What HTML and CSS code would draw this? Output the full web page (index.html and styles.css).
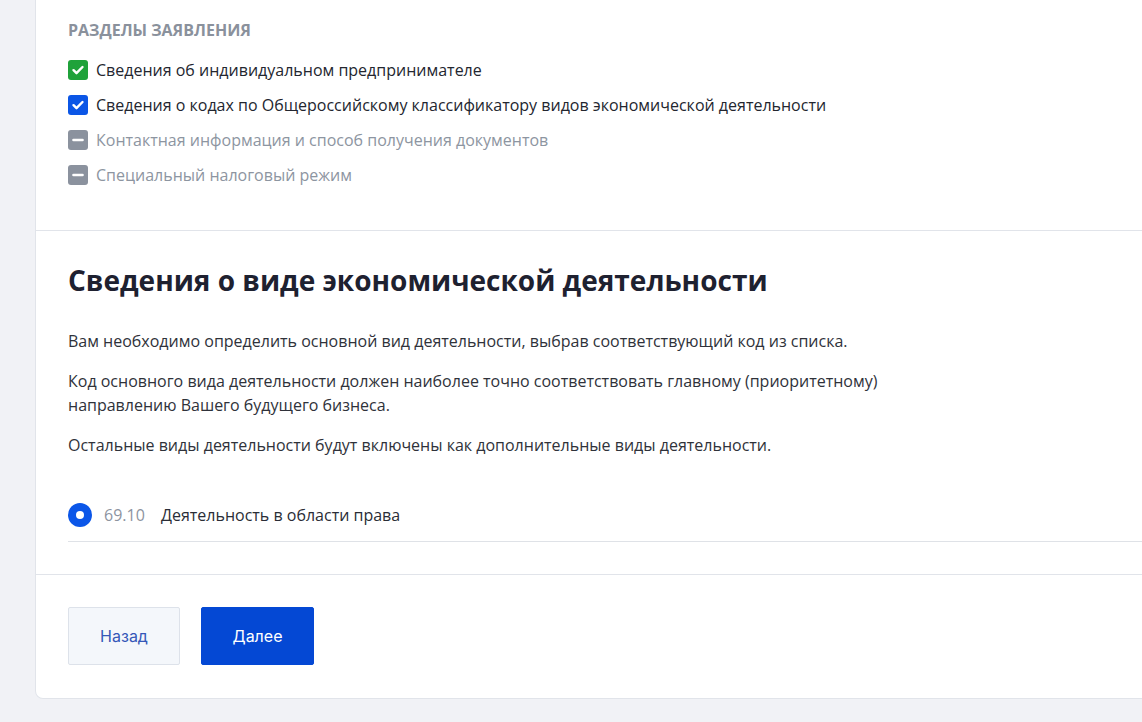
FILE: index.html
```html
<!DOCTYPE html>
<html lang="ru">
<head>
<meta charset="utf-8">
<title>Сведения о виде экономической деятельности</title>
<link rel="stylesheet" href="styles.css">
</head>
<body>
<main class="card">
  <section class="section sections-list">
    <h3 class="caption">РАЗДЕЛЫ ЗАЯВЛЕНИЯ</h3>
    <ul class="steps">
      <li class="step">
        <span class="box box-green">
          <svg viewBox="0 0 20 20" width="20" height="20"><path d="M5.5 10.2l3 3 6-6.2" fill="none" stroke="#fff" stroke-width="2.4" stroke-linecap="round" stroke-linejoin="round"/></svg>
        </span>
        <span class="step-label">Сведения об индивидуальном предпринимателе</span>
      </li>
      <li class="step">
        <span class="box box-blue">
          <svg viewBox="0 0 20 20" width="20" height="20"><path d="M5.5 10.2l3 3 6-6.2" fill="none" stroke="#fff" stroke-width="2.4" stroke-linecap="round" stroke-linejoin="round"/></svg>
        </span>
        <span class="step-label">Сведения о кодах по Общероссийскому классификатору видов экономической деятельности</span>
      </li>
      <li class="step step-off">
        <span class="box box-gray">
          <svg viewBox="0 0 20 20" width="20" height="20"><path d="M5.5 10h9" fill="none" stroke="#fff" stroke-width="2.6" stroke-linecap="round"/></svg>
        </span>
        <span class="step-label">Контактная информация и способ получения документов</span>
      </li>
      <li class="step step-off">
        <span class="box box-gray">
          <svg viewBox="0 0 20 20" width="20" height="20"><path d="M5.5 10h9" fill="none" stroke="#fff" stroke-width="2.6" stroke-linecap="round"/></svg>
        </span>
        <span class="step-label">Специальный налоговый режим</span>
      </li>
    </ul>
  </section>

  <section class="section activity">
    <h1 class="title">Сведения о виде экономической деятельности</h1>
    <p class="text">Вам необходимо определить основной вид деятельности, выбрав соответствующий код из списка.</p>
    <p class="text">Код основного вида деятельности должен наиболее точно соответствовать главному (приоритетному) направлению Вашего будущего бизнеса.</p>
    <p class="text">Остальные виды деятельности будут включены как дополнительные виды деятельности.</p>
    <div class="option">
      <span class="radio"></span>
      <span class="code">69.10</span>
      <span class="option-label">Деятельность в области права</span>
    </div>
  </section>

  <section class="section actions">
    <button class="btn btn-secondary">Назад</button>
    <button class="btn btn-primary">Далее</button>
  </section>
</main>
</body>
</html>
```

FILE: styles.css
```css
html, body {
  margin: 0;
  padding: 0;
}

body {
  background: #f1f2f6;
  font-family: "Open Sans", "Noto Sans", sans-serif;
  color: #2a2d36;
  overflow: hidden;
  width: 1142px;
  height: 722px;
}

.card {
  margin-left: 35px;
  margin-right: -30px;
  background: #fff;
  border: 1px solid #e1e4ea;
  border-top: none;
  border-radius: 0 0 8px 8px;
}

.section {
  border-bottom: 1px solid #e1e4ea;
}

.section:last-child {
  border-bottom: none;
}

.sections-list {
  padding: 20px 0 45px 32px;
}

.caption {
  margin: 0;
  font-size: 16px;
  line-height: 20px;
  font-weight: 700;
  color: #8a919c;
}

.steps {
  list-style: none;
  margin: 20px 0 0;
  padding: 0;
  display: flex;
  flex-direction: column;
  gap: 15px;
}

.step {
  display: flex;
  align-items: center;
  gap: 8px;
  height: 20px;
  font-size: 16px;
  color: #23262f;
}

.step-off {
  color: #8d95a1;
}

.box {
  width: 20px;
  height: 20px;
  border-radius: 3px;
  display: flex;
  flex-shrink: 0;
}

.box-green { background: #1fa23a; }
.box-blue { background: #0b56e6; }
.box-gray { background: #8b929e; }

.activity {
  padding: 31px 0 32px 32px;
}

.title {
  margin: 0 0 31px;
  font-size: 28px;
  line-height: 36px;
  font-weight: 700;
  color: #1e2130;
}

.text {
  margin: 0 0 16px;
  max-width: 860px;
  font-size: 16px;
  line-height: 24px;
  color: #2f323a;
}

.option {
  margin-top: 34px;
  display: flex;
  align-items: center;
  padding: 12px 0 14px;
  border-bottom: 1px solid #dfe2e7;
  font-size: 16px;
}

.radio {
  width: 24px;
  height: 24px;
  border-radius: 50%;
  background: #0b56e8;
  display: flex;
  align-items: center;
  justify-content: center;
  margin-right: 12px;
}

.radio::after {
  content: "";
  width: 8px;
  height: 8px;
  border-radius: 50%;
  background: #fff;
}

.code {
  color: #8d949f;
  width: 57px;
}

.option-label {
  color: #2a2d36;
}

.actions {
  padding: 32px 0 33px 32px;
  display: flex;
  gap: 21px;
}

.btn {
  height: 58px;
  border-radius: 2px;
  font-family: "Inter", "Roboto", sans-serif;
  font-size: 16px;
  cursor: pointer;
}

.btn-secondary {
  width: 112px;
  background: #f4f7fb;
  border: 1px solid #dde2ea;
  color: #3458b8;
}

.btn-primary {
  width: 113px;
  background: #0448d4;
  border: 1px solid #0448d4;
  color: #fff;
}
```
